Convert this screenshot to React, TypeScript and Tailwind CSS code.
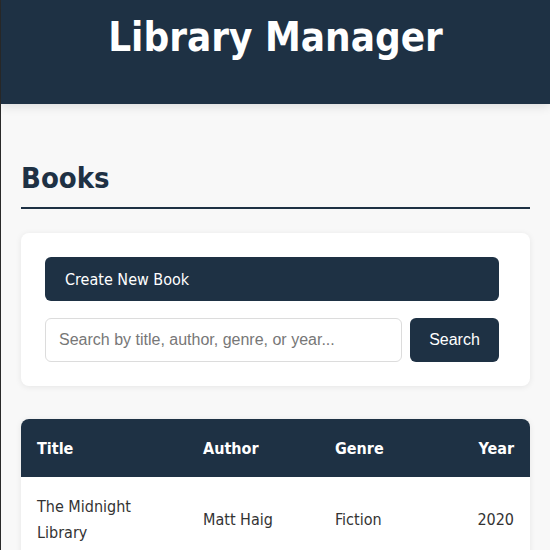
import React from 'react'

const books = [
  { title: 'The Midnight Library', author: 'Matt Haig', genre: 'Fiction', year: 2020 },
]

const sans = "font-['DejaVu_Sans_Condensed','DejaVu_Sans',sans-serif]"

export default function App() {
  return (
    <div className={`min-h-[550px] bg-[#f8f8f8] border-l border-[#2a2a2a] text-[#333] ${sans}`}>
      <header className="h-[104px] bg-[#1e3144] pt-[13px] shadow-[0_2px_10px_rgba(0,0,0,0.12)]">
        <h1 className="text-center text-[40px] leading-[48px] font-bold text-white">Library Manager</h1>
      </header>

      <main className="px-5">
        <h2 className="mt-[56px] border-b-2 border-[#1e3144] pb-[11px] text-[29px] leading-[36px] font-bold text-[#1e3144]">
          Books
        </h2>

        <section className="mt-[24px] rounded-lg bg-white pl-6 pr-[31px] py-6 shadow-[0_1px_6px_rgba(0,0,0,0.08)]">
          <button className="flex h-11 w-full items-center rounded-md bg-[#1e3144] px-5 pt-px text-base text-white">
            Create New Book
          </button>
          <div className="mt-[17px] flex gap-2">
            <input
              className="h-11 flex-1 rounded-md border border-[#dcdcdc] px-[13px] font-['Liberation_Sans',Arial,sans-serif] text-base placeholder:text-[#777] outline-none"
              placeholder="Search by title, author, genre, or year..."
            />
            <button className="h-11 w-[89px] rounded-md bg-[#1e3144] font-['Liberation_Sans',Arial,sans-serif] text-base text-white">
              Search
            </button>
          </div>
        </section>

        <div className="mt-[33px] overflow-hidden rounded-t-lg bg-white shadow-[0_1px_6px_rgba(0,0,0,0.08)]">
          <table className="w-full table-fixed border-collapse text-base">
            <colgroup>
              <col className="w-[166px]" />
              <col className="w-[132px]" />
              <col className="w-[120px]" />
              <col />
            </colgroup>
            <thead className="bg-[#1e3144] text-white">
              <tr>
                <th className="px-4 pt-[17px] pb-[15px] text-left leading-[26px] font-bold">Title</th>
                <th className="px-4 pt-[17px] pb-[15px] text-left leading-[26px] font-bold">Author</th>
                <th className="px-4 pt-[17px] pb-[15px] text-left leading-[26px] font-bold">Genre</th>
                <th className="px-4 pt-[17px] pb-[15px] text-right leading-[26px] font-bold">Year</th>
              </tr>
            </thead>
            <tbody>
              {books.map((b) => (
                <tr key={b.title}>
                  <td className="px-4 pt-[17px] pb-[15px] leading-[26px]">{b.title}</td>
                  <td className="px-4 pt-[17px] pb-[15px] leading-[26px]">{b.author}</td>
                  <td className="px-4 pt-[17px] pb-[15px] leading-[26px]">{b.genre}</td>
                  <td className="px-4 pt-[17px] pb-[15px] text-right leading-[26px]">{b.year}</td>
                </tr>
              ))}
            </tbody>
          </table>
        </div>
      </main>
    </div>
  )
}
